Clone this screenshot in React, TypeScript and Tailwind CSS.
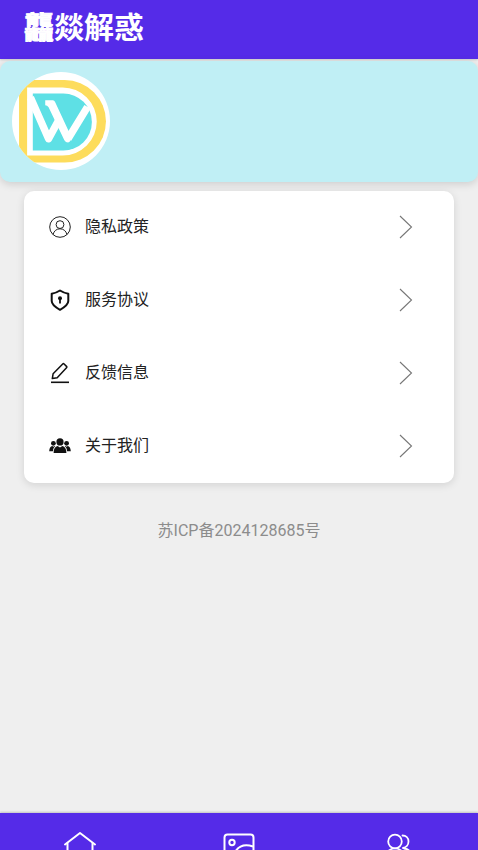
import React from "react";

function BrandLogo() {
  return (
    <svg viewBox="37 54 292 292" className="size-[98px]" role="img" aria-label="DW">
      <defs>
        <clipPath id="disc">
          <circle cx="183" cy="200" r="146" />
        </clipPath>
      </defs>
      <g clipPath="url(#disc)">
        <rect x="37" y="54" width="292" height="292" fill="#fff" />
        <path d="M58 78H194A123 123 0 0 1 194 324H58Z" fill="#fddc5c" />
        <path d="M82 100H188A101 101 0 0 1 188 303H82Z" fill="#fff" />
        <path d="M99 118H190A85 85 0 0 1 190 288H99Z" fill="#5ee0e5" />
        <path
          d="M92 130L146 253L178 194M204 253L262 158"
          fill="none"
          stroke="#fff"
          strokeWidth="22"
          strokeLinejoin="round"
        />
        <path d="M136 138H159Q163 138 165 143L214 248Q212 264 204 264Q197 264 193 257L146 159Q142 153 136 153Z" fill="#fff" />
      </g>
    </svg>
  );
}

function UserIcon() {
  return (
    <svg viewBox="0 0 22 22" className="size-[22px]" fill="none" stroke="#222" strokeWidth="1" aria-hidden="true">
      <circle cx="11" cy="11" r="10.3" />
      <circle cx="11" cy="8.6" r="3.9" />
      <path d="M4 18.6C5 14.8 7.6 12.8 11 12.8S17 14.8 18 18.6" />
    </svg>
  );
}

function ShieldIcon() {
  return (
    <svg viewBox="0 0 22 22" className="size-[22px]" fill="none" stroke="#111" strokeWidth="2" strokeLinejoin="round" aria-hidden="true">
      <path d="M11 1.5Q15 4.1 19.3 4.7V12C19.3 15.6 15.5 18.3 11 20.8C6.5 18.3 2.7 15.6 2.7 12V4.7Q7 4.1 11 1.5Z" />
      <circle cx="11" cy="9.3" r="2" fill="#111" stroke="none" />
      <path d="M11 9.5V14.6" strokeWidth="1.8" />
    </svg>
  );
}

function PencilIcon() {
  return (
    <svg viewBox="0 0 22 22" className="size-[22px]" fill="none" stroke="#111" strokeWidth="1.5" strokeLinejoin="round" aria-hidden="true">
      <path d="M13.7 2Q14.4 1.3 15.1 2L17.5 4.4Q18.2 5.1 17.5 5.8L8.2 15.8L3.3 16.6L4.1 11.8Z" />
      <path d="M2 20.3H20" strokeWidth="1.6" />
    </svg>
  );
}

function TeamIcon() {
  return (
    <svg viewBox="0 0 22 22" className="size-[22px]" fill="#111" aria-hidden="true">
      <circle cx="11" cy="6.9" r="3.6" />
      <circle cx="4.4" cy="8.3" r="2.4" />
      <circle cx="17.6" cy="8.3" r="2.4" />
      <path d="M4.6 18C4.6 14 6 11.6 8.6 11L11 12.6L13.4 11C16 11.6 17.4 14 17.4 18Z" />
      <path d="M.2 16.2C.4 13 1.5 11.3 3.3 11L4.4 11.8L5.6 11L6.2 11.3C4.8 12.6 4.1 14 3.9 16.2Z" />
      <path d="M21.8 16.2C21.6 13 20.5 11.3 18.7 11L17.6 11.8L16.4 11L15.8 11.3C17.2 12.6 17.9 14 18.1 16.2Z" />
    </svg>
  );
}

function Chevron() {
  return (
    <svg viewBox="0 0 14 24" className="h-6 w-[14px]" fill="none" stroke="#777" strokeWidth="1.1" aria-hidden="true">
      <path d="M1 1L12.5 12L1 23" />
    </svg>
  );
}

function HomeIcon() {
  return (
    <svg viewBox="0 0 36 36" className="size-9" fill="none" stroke="#fff" strokeWidth="2" strokeLinejoin="round" strokeLinecap="round" aria-hidden="true">
      <path d="M3 13.5L18 2L33 13.5" />
      <path d="M5.5 12.5V32H30.5V12.5" />
    </svg>
  );
}

function PictureIcon() {
  return (
    <svg viewBox="0 0 36 36" className="size-9" fill="none" stroke="#fff" strokeWidth="2" aria-hidden="true">
      <rect x="3.5" y="3.5" width="29" height="28" rx="3" />
      <circle cx="11" cy="11.5" r="2.7" />
      <path d="M14 21C18 14.5 25 13.2 32 15.5" />
      <path d="M4 27L12 22L22 30" />
    </svg>
  );
}

function PeopleIcon() {
  return (
    <svg viewBox="0 0 36 36" className="size-9" fill="none" stroke="#fff" strokeWidth="1.8" strokeLinecap="round" aria-hidden="true">
      <circle cx="15" cy="10.5" r="6.8" />
      <path d="M22.5 4.5C26 4.5 28.5 7 28.5 10.5S26 16.5 23 17" />
      <path d="M5 30C5 22 9 17.3 15 17.3S25 22 25 30Z" />
      <path d="M24 17.5C29 18 32 22 32 28H28" />
    </svg>
  );
}

const rows = [
  { label: "隐私政策", Icon: UserIcon },
  { label: "服务协议", Icon: ShieldIcon },
  { label: "反馈信息", Icon: PencilIcon },
  { label: "关于我们", Icon: TeamIcon },
];

const tabs = [
  { label: "首页", Icon: HomeIcon },
  { label: "图片", Icon: PictureIcon },
  { label: "我的", Icon: PeopleIcon },
];

export default function App() {
  return (
    <div className="flex h-screen flex-col overflow-hidden bg-[#efefef] font-[Roboto,'Noto_Sans_CJK_SC',sans-serif]">
      <header className="flex h-[59px] shrink-0 items-center bg-[#552be8] px-6 pb-[3px] shadow-[0_1px_2px_rgba(0,0,0,0.15)]">
        <h1 className="text-[30px] leading-9 font-bold text-white">
          <span className="[-webkit-text-stroke:1px_white]">龘</span>燚解惑
        </h1>
      </header>

      <main className="flex min-h-0 flex-1 flex-col pt-0.5">
        <section className="flex shrink-0 items-center rounded-[10px] bg-[#c0eff5] px-3 pt-[11px] pb-3 shadow-[0_2px_8px_rgba(0,0,0,0.15)]">
          <BrandLogo />
        </section>

        <ul className="mx-6 mt-[9px] shrink-0 rounded-[10px] bg-white shadow-[0_2px_8px_rgba(0,0,0,0.12)]">
          {rows.map(({ label, Icon }) => (
            <li key={label}>
              <button type="button" className="flex h-[73px] w-full items-center pr-[41px] pb-px pl-[25px]">
                <Icon />
                <span className="ml-[14px] flex-1 text-left text-base text-[#222]">{label}</span>
                <Chevron />
              </button>
            </li>
          ))}
        </ul>

        <p className="mt-9 text-center text-base text-[#8c8c8c]">苏ICP备2024128685号</p>
      </main>

      <nav className="grid h-[37px] shrink-0 grid-cols-3 overflow-hidden bg-[#552be8] shadow-[0_-1px_2px_rgba(0,0,0,0.2)]">
        {tabs.map(({ label, Icon }) => (
          <button key={label} type="button" aria-label={label} className="flex items-start justify-center pt-[18px]">
            <Icon />
          </button>
        ))}
      </nav>
    </div>
  );
}
